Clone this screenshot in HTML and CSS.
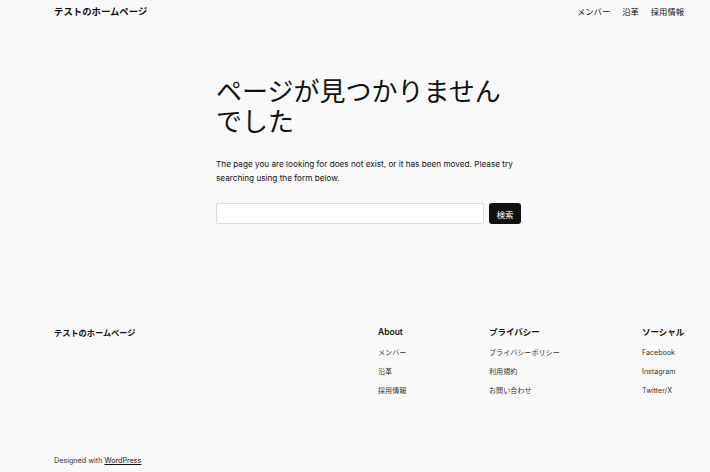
FILE: index.html
```html
<!DOCTYPE html>
<html lang="ja">
<head>
<meta charset="utf-8">
<title>ページが見つかりませんでした</title>
<link rel="stylesheet" href="styles.css">
</head>
<body>
<header class="site-header">
  <div class="site-title">テストのホームページ</div>
  <nav class="main-nav">
    <a href="#">メンバー</a>
    <a href="#">沿革</a>
    <a href="#">採用情報</a>
  </nav>
</header>
<main class="content">
  <h1 class="title">ページが見つかりませんでした</h1>
  <p class="lead">The page you are looking for does not exist, or it has been moved. Please try searching using the form below.</p>
  <form class="search">
    <input class="search-input" type="search" aria-label="検索">
    <button class="search-btn" type="button">検索</button>
  </form>
</main>
<footer class="site-footer">
  <div class="footer-top">
    <div class="footer-title">テストのホームページ</div>
    <div class="footer-col col-about">
      <h2 class="col-head">About</h2>
      <a href="#">メンバー</a>
      <a href="#">沿革</a>
      <a href="#">採用情報</a>
    </div>
    <div class="footer-col col-privacy">
      <h2 class="col-head">プライバシー</h2>
      <a href="#">プライバシーポリシー</a>
      <a href="#">利用規約</a>
      <a href="#">お問い合わせ</a>
    </div>
    <div class="footer-col col-social">
      <h2 class="col-head">ソーシャル</h2>
      <a href="#">Facebook</a>
      <a href="#">Instagram</a>
      <a href="#">Twitter/X</a>
    </div>
  </div>
  <div class="credit">Designed with <a href="#">WordPress</a></div>
</footer>
</body>
</html>
```
FILE: styles.css
```css
html, body {
  margin: 0;
  padding: 0;
}
body {
  background: #f9f9f9;
  color: #111;
  font-family: Inter, "Noto Sans CJK JP", sans-serif;
  width: 710px;
  height: 472px;
  overflow: hidden;
}
a {
  color: #111;
  text-decoration: none;
}
.site-header {
  display: flex;
  justify-content: space-between;
  align-items: center;
  padding: 3px 26px 0 54px;
  height: 15px;
  font-size: 9.4px;
}
.site-title {
  font-weight: 600;
}
.main-nav {
  display: flex;
  gap: 12px;
  font-size: 8.3px;
}
.content {
  margin: 0 0 0 216px;
  width: 305px;
  padding-top: 59px;
}
.title {
  margin: 0;
  font-size: 26px;
  font-weight: 400;
  line-height: 30px;
}
.lead {
  margin: 20px 0 0;
  font-size: 8.2px;
  line-height: 14px;
}
.search {
  display: flex;
  gap: 5px;
  margin-top: 18px;
}
.search-input {
  flex: 1;
  height: 21px;
  box-sizing: border-box;
  border: 1px solid #d8dde3;
  border-radius: 2px;
  background: #fff;
  margin: 0;
  padding: 0;
}
.search-btn {
  width: 32px;
  height: 21px;
  box-sizing: border-box;
  border: 0;
  border-radius: 3px;
  background: #111;
  color: #fff;
  font-family: inherit;
  font-size: 8.4px;
  padding: 0;
  margin: 0;
}
.site-footer {
  padding: 0 0 0 54px;
  margin-top: 102px;
}
.footer-top {
  display: flex;
}
.footer-title {
  flex: 0 0 324px;
  font-size: 8.2px;
  font-weight: 600;
  line-height: 14px;
}
.footer-col {
  display: flex;
  flex-direction: column;
  font-size: 7.1px;
  line-height: 11px;
  gap: 8px;
}
.col-about { flex: 0 0 111px; }
.col-privacy { flex: 0 0 153px; }
.col-social { flex: 0 0 68px; }
.col-head {
  margin: 0 0 1px;
  font-size: 8.5px;
  font-weight: 600;
  line-height: 12px;
}
.footer-col a {
  color: #333;
}
.credit {
  margin-top: 60px;
  font-size: 7.2px;
  color: #333;
}
.credit a {
  color: #111;
  text-decoration: underline;
}
```
